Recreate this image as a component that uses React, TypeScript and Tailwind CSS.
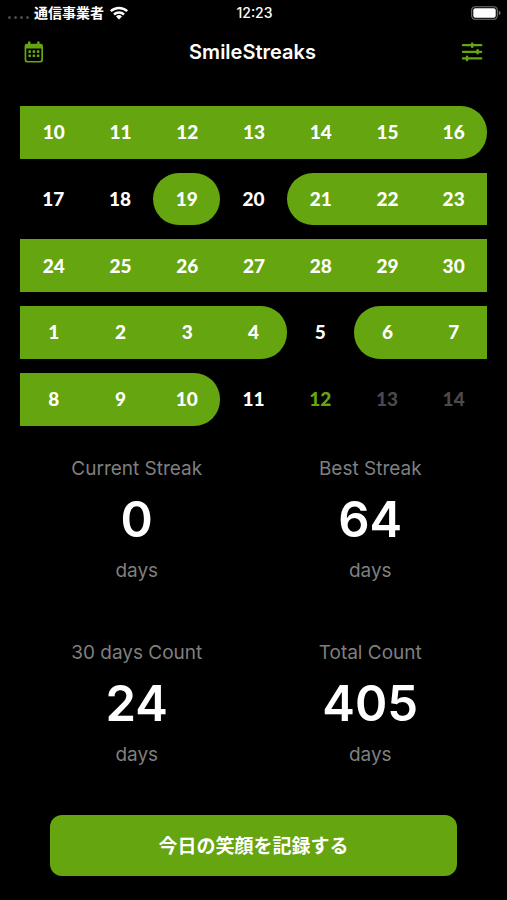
import { useState } from 'react';
import { clsx } from 'clsx';

type Day = {
  id: number;
  label: number;
  smiled: boolean;
  state?: 'today' | 'future';
};

// Last five weeks, one entry per day
const LABELS = [
  10, 11, 12, 13, 14, 15, 16,
  17, 18, 19, 20, 21, 22, 23,
  24, 25, 26, 27, 28, 29, 30,
  1, 2, 3, 4, 5, 6, 7,
  8, 9, 10, 11, 12, 13, 14
];
const MISSED = [7, 8, 10, 25, 31];
const TODAY = 32;

const DAYS: Day[] = LABELS.map((label, id) => ({
  id,
  label,
  smiled: id < TODAY && !MISSED.includes(id),
  state: id === TODAY ? 'today' : id > TODAY ? 'future' : undefined
}));

const STATS = [
  { title: 'Current Streak', value: 0 },
  { title: 'Best Streak', value: 64 },
  { title: '30 days Count', value: 24 },
  { title: 'Total Count', value: 405 }
];

function WifiIcon() {
  return (
    <svg viewBox="0 0 20 14" className="w-5 h-[14px]" aria-hidden="true">
      <g fill="none" stroke="white" strokeWidth="2.5">
        <path d="M1.8 5.2A11.8 11.8 0 0 1 18.2 5.2" />
        <path d="M5 8.5A7.2 7.2 0 0 1 15 8.5" />
      </g>
      <path d="M10 13.4L7 10.4A4.3 4.3 0 0 1 13 10.4Z" fill="white" />
    </svg>
  );
}

function BatteryIcon() {
  return (
    <svg viewBox="0 0 30 14" className="w-[30px] h-[14px]" aria-hidden="true">
      <rect x="0.7" y="0.7" width="25.6" height="12.6" rx="3.6" fill="none" stroke="#777777" strokeWidth="1.1" />
      <rect x="2.3" y="2.3" width="22.4" height="9.4" rx="2" fill="white" />
      <path d="M27.8 4.8Q29.6 5.4 29.6 7T27.8 9.2Z" fill="#777777" />
    </svg>
  );
}

function CalendarIcon() {
  return (
    <svg viewBox="0 0 20 22" className="w-5 h-[22px]" aria-hidden="true">
      <path
        fill="currentColor"
        fillRule="evenodd"
        d="M4 1.2Q4 .3 5.2 .3T6.4 1.2V2.8H13.2V1.2Q13.2 .3 14.4 .3T15.6 1.2V2.8H16.8Q19 2.8 19 5V19Q19 21.5 16.6 21.5H3Q.6 21.5 .6 19V5Q.6 2.8 2.8 2.8H4ZM2.3 7.6V18.6Q2.3 19.9 3.6 19.9H16Q17.3 19.9 17.3 18.6V7.6Z"
      />
      <g fill="currentColor">
        {[9.3, 13.4].map(y =>
          [4.4, 8.6, 12.8].map(x => <rect key={`${x}-${y}`} x={x} y={y} width="2.6" height="2.6" rx="0.6" />)
        )}
      </g>
    </svg>
  );
}

function SlidersIcon() {
  return (
    <svg viewBox="0 0 22 20" className="w-[22px] h-5" aria-hidden="true">
      <g stroke="currentColor" strokeWidth="2.2" strokeLinecap="round">
        <path d="M1.9 3.2H20.3M1.9 9.8H20.3M1.9 16.4H20.3" />
        <path d="M11.2 1.7V4.7M16.6 8.3V11.3M6 14.9V17.9" strokeWidth="2.6" />
      </g>
    </svg>
  );
}

function DayCell({ day }: { day: Day }) {
  const column = day.id % 7;
  const startsRun = day.smiled && day.id > 0 && !DAYS[day.id - 1].smiled;
  const endsRun = day.smiled && !DAYS[day.id + 1].smiled;
  // The 16th closes its run because the 17th was missed, other weeks run off the edge
  return (
    <li className="aspect-square py-[7px]">
      <div
        className={clsx(
          'flex h-full items-center justify-center text-[19px] font-black',
          day.smiled && 'bg-[#65a510]',
          startsRun && 'rounded-l-[26px]',
          endsRun && 'rounded-r-[26px]',
          day.smiled && !endsRun && column < 6 && '-mr-px',
          day.state === 'today' && 'text-[#65a510]',
          day.state === 'future' && 'text-[#4a4a4c]'
        )}
      >
        {day.label}
      </div>
    </li>
  );
}

export default function App() {
  const [recorded, setRecorded] = useState(false);

  return (
    <div className="min-h-screen bg-black text-white font-[Inter,'Noto_Sans_CJK_JP',sans-serif]">
      {/* Status bar */}
      <div className="grid grid-cols-3 items-center h-[26px] pl-2 pr-[6px] text-[14px] leading-5">
        <div className="flex items-center gap-[5px] whitespace-nowrap">
          <div className="flex gap-[3px] pt-2">
            {[0, 1, 2, 3].map(dot => (
              <span key={dot} className="size-[3px] rounded-full bg-[#4a4a4a]" />
            ))}
          </div>
          <span className="font-bold">通信事業者</span>
          <WifiIcon />
        </div>
        <span className="text-center font-medium">12:23</span>
        <div className="flex justify-end">
          <BatteryIcon />
        </div>
      </div>

      <header className="flex items-center justify-between h-[52px] px-6">
        <button type="button" aria-label="Calendar" className="text-[#65a510]">
          <CalendarIcon />
        </button>
        <h1 className="text-[20px] leading-6 font-semibold">SmileStreaks</h1>
        <button type="button" aria-label="Settings" className="text-[#65a510]">
          <SlidersIcon />
        </button>
      </header>

      <main className="pt-[21px] pb-6">
        <ol className="grid grid-cols-7 px-5 font-[Lato,sans-serif]">
          {DAYS.map(day => (
            <DayCell key={day.id} day={day} />
          ))}
        </ol>

        <dl className="grid grid-cols-2 gap-y-[58px] px-5 pt-6 text-center text-[19px] leading-6 text-[#7f7f7f]">
          {STATS.map(stat => (
            <div key={stat.title}>
              <dt>{stat.title}</dt>
              <dd>
                <p className="py-2 text-[49px] leading-[62px] font-semibold text-white">{stat.value}</p>
                <p>days</p>
              </dd>
            </div>
          ))}
        </dl>

        <div className="px-[50px] pt-12">
          <button
            type="button"
            aria-pressed={recorded}
            onClick={() => setRecorded(prev => !prev)}
            className="w-full rounded-[12px] bg-[#65a510] pt-[18px] pb-[15px] text-[19px] leading-7 font-bold"
          >
            今日の笑顔を記録する
          </button>
        </div>
      </main>
    </div>
  );
}
